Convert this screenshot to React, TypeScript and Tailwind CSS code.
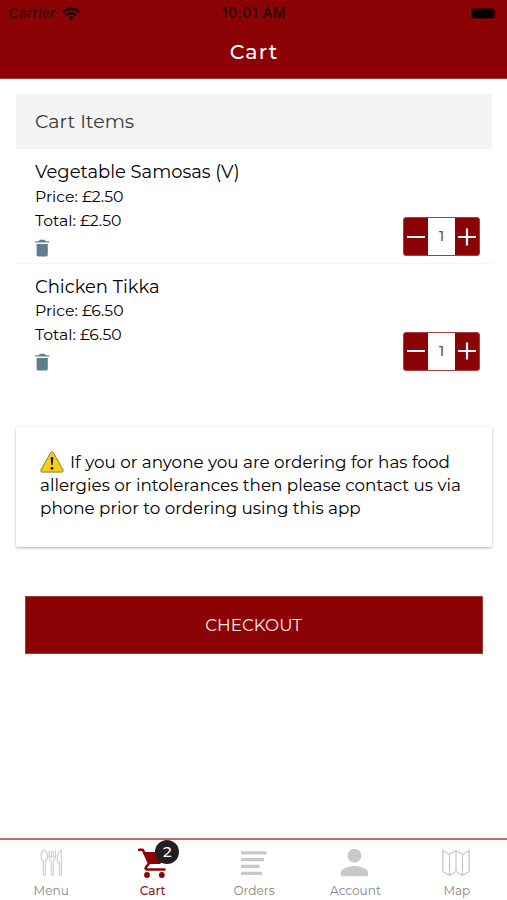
import type { ReactNode } from "react";
import { IoMdTrash } from "react-icons/io";
import { MdPerson } from "react-icons/md";
import { clsx } from "clsx";

interface CartItem {
  name: string;
  price: string;
  total: string;
  quantity: number;
}

const items: CartItem[] = [
  { name: "Vegetable Samosas (V)", price: "£2.50", total: "£2.50", quantity: 1 },
  { name: "Chicken Tikka", price: "£6.50", total: "£6.50", quantity: 1 },
];

function StatusBar() {
  return (
    <div className="grid h-7 grid-cols-3 items-center pl-[9px] pr-[11px] font-['Inter',sans-serif] text-[13.5px] leading-none text-black/80">
      <div className="flex items-center gap-[6px]">
        <span className="tracking-[0.35px]">Carrier</span>
        <svg width="18" height="14" viewBox="0 0 18 14" fill="none" stroke="#160000" strokeWidth="2.5">
          <path d="M1 5C5.4.7 12.6.7 17 5" />
          <path d="M3.9 8.2c2.9-2.7 7.3-2.7 10.2 0" />
          <path d="M9 13.6 5.9 10.5c1.8-1.6 4.4-1.6 6.2 0z" fill="#160000" stroke="none" />
        </svg>
      </div>
      <span className="pl-[3px] text-center text-[13.8px] font-medium tracking-[0.6px]">10:01 AM</span>
      <div className="flex items-center justify-end gap-px">
        <div className="-mt-px h-[9px] w-[22px] rounded-[2px] bg-black ring-1 ring-black/40" />
        <div className="h-1 w-px bg-black/40" />
      </div>
    </div>
  );
}

function Stepper({ quantity }: { quantity: number }) {
  return (
    <div className="flex h-[39px] w-[77px] overflow-hidden rounded-[3px] border border-[#a63c3f] bg-[#8b0304] text-white">
      <button className="flex w-[24px] items-center justify-center">
        <svg width="18" height="18" viewBox="0 0 18 18" stroke="currentColor" strokeWidth="2">
          <path d="M0 9h18" />
        </svg>
      </button>
      <div className="flex w-[27px] items-center justify-center bg-white text-[14px] font-medium text-[#8b3a48]">
        {quantity}
      </div>
      <button className="flex flex-1 items-center justify-center">
        <svg className="-ml-px" width="18" height="18" viewBox="0 0 18 18" stroke="currentColor" strokeWidth="2.2">
          <path d="M0 9h18M9 0.5v17" />
        </svg>
      </button>
    </div>
  );
}

function CartRow({ item }: { item: CartItem }) {
  return (
    <div className="flex h-[114.5px] justify-between border-b border-[#f4f4f4] pl-[19px] pr-3 pt-[11px] last:border-transparent">
      <div>
        <h3 className="text-[17.95px] leading-[24.5px]">{item.name}</h3>
        <p className="text-[15.7px] leading-6">Price: {item.price}</p>
        <p className="text-[15.7px] leading-[24.5px]">Total: {item.total}</p>
        <button className="-ml-[4px] mt-[3.5px] block text-[#607d8b]">
          <IoMdTrash size={22.4} />
        </button>
      </div>
      <div className="mt-[57px]">
        <Stepper quantity={item.quantity} />
      </div>
    </div>
  );
}

function WarningIcon() {
  return (
    <svg className="mr-[6px] inline-block align-[-5px]" width="24" height="22" viewBox="0 0 24 22">
      <path d="M10.7 1.5c.6-1 2-1 2.6 0l9.8 17.6c.5 1-.1 2-1.2 2H2.1c-1.1 0-1.7-1-1.2-2z" fill="#f5cf16" stroke="#8b7a35" strokeWidth="1" />
      <path d="M10.7 7.3c0-1.8 2.6-1.8 2.6 0l-.7 6.6h-1.2z" fill="#111" />
      <circle cx="12" cy="17.3" r="1.4" fill="#111" />
    </svg>
  );
}

function CutleryIcon() {
  return (
    <svg className="ml-px mt-[1px]" width="23" height="30" viewBox="0 0 24 30" fill="none" stroke="#cfcfcf" strokeWidth="1.2">
      <path d="M4.5 1.5C2.8 1.5 1 4.7 1 8c0 2.500 1.200 4.300 2.500 5v14.200c0 .8 2 .8 2 0V13C6.800 12.300 8 10.500 8 8c0-3.300-1.800-6.500-3.500-6.500z" />
      <path d="M9.500 2v7.500c0 2 1 3.200 2.300 3.700v14c0 .8 2 .8 2 0v-14c1.300-.5 2.300-1.700 2.300-3.700V2M11.700 2v6M13.900 2v6M9.500 8.500h6.600" />
      <path d="M22.300 1.500c-3 1.500-4.300 5.500-4.300 9.500 0 2 .7 3.500 2.300 4v12.200c0 .8 2 .8 2 0z" />
    </svg>
  );
}

function CartIcon() {
  return (
    <svg className="mt-[2px]" width="28" height="30" viewBox="0 0 28 30" fill="#8b0304">
      <path d="M5.500 4H26.500c1 0 1.500.8 1.100 1.600L23.200 14.700c-.4.8-1.100 1.300-2 1.300H10.400z" />
      <path
        d="M1 1.800h3.800L11 15.300 7.900 19.500c-.7 1.100-.2 2 1.300 2H26.500"
        fill="none"
        stroke="#8b0304"
        strokeWidth="2.500"
        strokeLinecap="round"
        strokeLinejoin="round"
      />
      <circle cx="9" cy="27" r="2.900" />
      <circle cx="23.800" cy="27" r="2.900" />
    </svg>
  );
}

function OrdersIcon() {
  return (
    <svg className="mt-[2px]" width="26" height="25" viewBox="0 0 26 25" stroke="#c9c9c9" strokeWidth="3.2">
      <path d="M0 1.800h25.500M0 8.600h23M0 15.400h18.500M0 22.400h21" />
    </svg>
  );
}

function MapIcon() {
  return (
    <svg className="mt-[2px]" width="28" height="28" viewBox="0 0 28 28" fill="none" stroke="#c9c9c9" strokeWidth="1.3" strokeLinejoin="round">
      <path d="M.8 1.500 7.500 5.500 14 1.500l6.500 4 6.700-4v21l-6.700 4-6.500-4-6.500 4-6.700-4zM7.500 5.500v21M14 1.500v21M20.500 5.500v21" />
    </svg>
  );
}

interface TabProps {
  label: string;
  icon: ReactNode;
  active?: boolean;
  badge?: number;
}

function Tab({ label, icon, active, badge }: TabProps) {
  return (
    <button
      className={clsx(
        "relative flex flex-1 flex-col items-center text-[12.1px] leading-[14px]",
        active ? "font-medium text-[#9a1426]" : "text-[#858585]"
      )}
    >
      <span className="flex h-11 items-center justify-center">{icon}</span>
      <span className="pl-px">{label}</span>
      {badge && (
        <span className="absolute left-[54px] top-0 flex size-6 items-center justify-center rounded-full bg-[#202020] text-[15px] font-medium text-white">
          {badge}
        </span>
      )}
    </button>
  );
}

export default function App() {
  return (
    <div className="flex h-[900px] w-[507px] flex-col bg-white font-['Montserrat','Inter',sans-serif] text-black">
      <header className="h-[79px] border-b border-[#a9393b] bg-[#8b0304]">
        <StatusBar />
        <h1 className="pl-[1px] pt-[9px] text-center text-[20.5px] font-medium leading-[30px] tracking-[1.2px] text-white">
          Cart
        </h1>
      </header>

      <main className="flex-1 pl-4 pr-[15px] pt-[15px]">
        <section>
          <h2 className="flex h-[55px] items-center bg-[#f4f4f4] pl-[19px] pt-px text-[19px] text-[#383838]">
            Cart Items
          </h2>
          {items.map((item) => (
            <CartRow key={item.name} item={item} />
          ))}
        </section>

        <section className="mt-[49px] h-[120px] rounded-[2px] px-6 pt-[23.500px] text-[16.8px] leading-[23.3px] shadow-[0_1px_3px_rgba(0,0,0,0.3)]">
          <p className="whitespace-nowrap">
            <WarningIcon />
            If you or anyone you are ordering for has food
            <br />
            allergies or intolerances then please contact us via
            <br />
            phone prior to ordering using this app
          </p>
        </section>

        <div className="px-[9px] pt-[49px]">
          <button className="h-[58px] w-full border border-[#a4383a] bg-[#8b0304] pr-px pt-px text-[16.8px] text-[#ffe9e9]">
            CHECKOUT
          </button>
        </div>
      </main>

      <nav className="flex h-[62px] border-t-2 border-[#bd6a6d]">
        <Tab label="Menu" icon={<CutleryIcon />} />
        <Tab label="Cart" icon={<CartIcon />} active badge={2} />
        <Tab label="Orders" icon={<OrdersIcon />} />
        <Tab label="Account" icon={<MdPerson size={41} color="#c9c9c9" />} />
        <Tab label="Map" icon={<MapIcon />} />
      </nav>
    </div>
  );
}
